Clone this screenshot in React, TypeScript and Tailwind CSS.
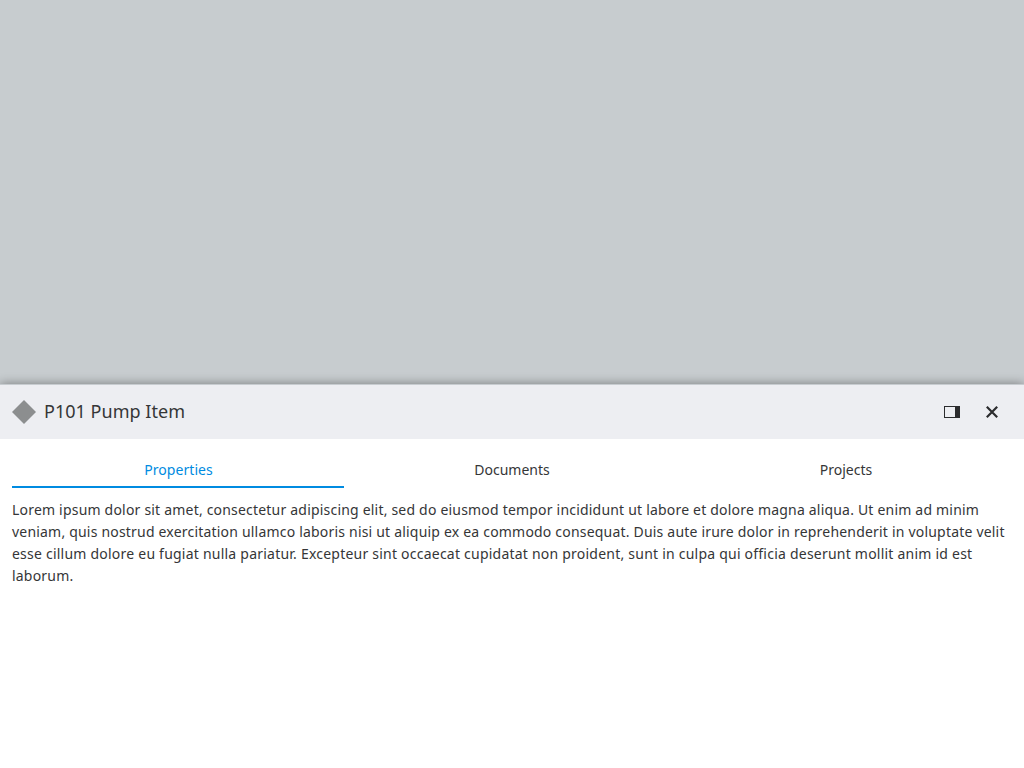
const tabs = ["Properties", "Documents", "Projects"];

export default function App() {
  return (
    <div className="flex h-screen flex-col justify-end overflow-hidden bg-[#c7cccf] font-['Noto_Sans',sans-serif] text-[#353637] antialiased">
      <section className="flex h-96 flex-col bg-white shadow-[0_0_10px_rgba(0,0,0,0.4)]">
        <header className="flex h-[55px] items-center border-t border-[#c7ccd0] bg-[#edeef2] px-3">
          <svg className="size-6" viewBox="0 0 24 24" fill="#8c8e8f">
            <path d="M12 0 24 12 12 24 0 12Z" />
          </svg>
          <h1 className="ml-2 flex-1 pb-0.5 text-lg tracking-[0.03px]">P101 Pump Item</h1>
          <button className="flex size-10 items-center justify-center" aria-label="Dock panel">
            <svg className="size-4" viewBox="0 0 16 16" fill="#2b2c2e">
              <path fillRule="evenodd" d="M0 2H16V14H0ZM1 3V13H11V3Z" />
            </svg>
          </button>
          <button className="flex size-10 items-center justify-center" aria-label="Close">
            <svg className="size-4" viewBox="0 0 16 16" stroke="#2b2c2e" strokeWidth="2.2">
              <path d="M2.8 2.8 13.2 13.2M13.2 2.8 2.8 13.2" />
            </svg>
          </button>
        </header>
        <nav className="mx-3 mt-3 grid grid-cols-3 gap-0.5">
          {tabs.map((tab, i) => (
            <button
              key={tab}
              className={
                i === 0
                  ? "h-[37px] border-b-2 border-[#008be1] pt-0.5 pl-px text-sm tracking-[0.05px] text-[#008be1]"
                  : "h-[37px] border-b-2 border-transparent pt-0.5 text-sm"
              }
            >
              {tab}
            </button>
          ))}
        </nav>
        <p className="px-3 pt-[11px] text-sm leading-[22px] tracking-[0.198px]">
          Lorem ipsum dolor sit amet, consectetur adipiscing elit, sed do eiusmod tempor incididunt ut labore et dolore magna aliqua. Ut enim ad minim veniam, quis nostrud exercitation ullamco laboris nisi ut aliquip ex ea commodo consequat. Duis aute irure dolor in reprehenderit in voluptate velit{" "}
          <span className="tracking-[0.225px]">
            esse cillum dolore eu fugiat nulla pariatur. Excepteur sint occaecat cupidatat non proident, sunt in culpa qui officia deserunt mollit anim id est{" "}
          </span>
          laborum.
        </p>
      </section>
    </div>
  );
}
